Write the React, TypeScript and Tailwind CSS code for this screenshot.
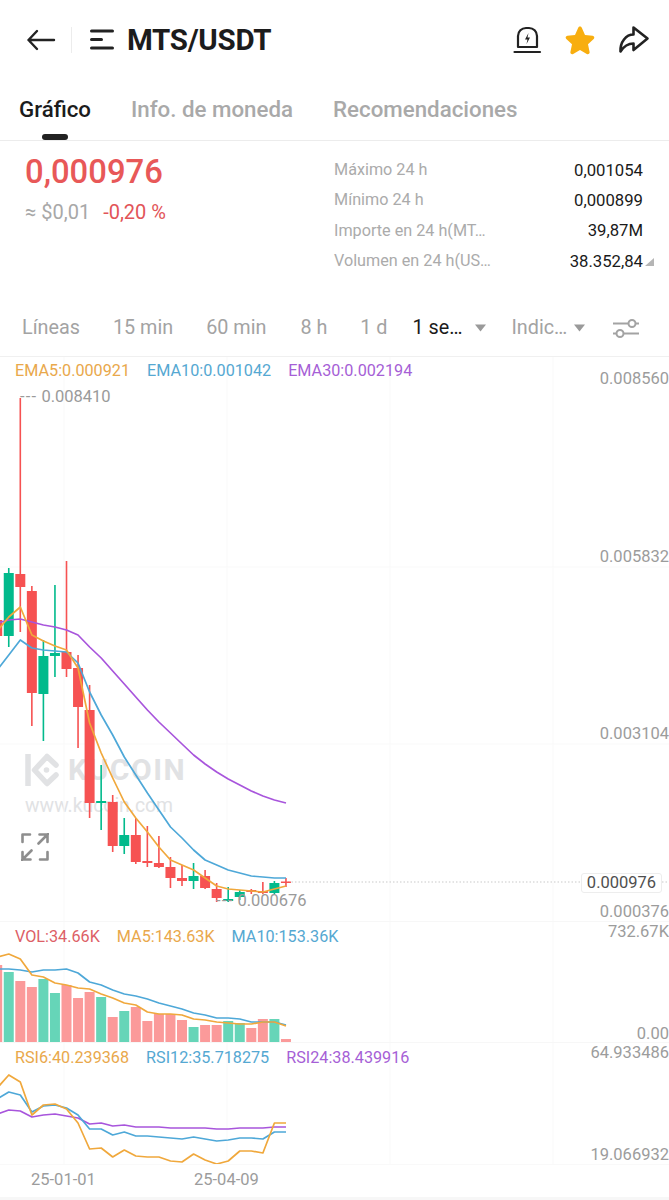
import { ReactNode } from 'react';

const RED = '#f65252';
const GREEN = '#02ba8c';
const ORANGE = '#f0a83c';
const BLUE = '#4ea8d8';
const PURPLE = '#a855dc';

const xAt = (i: number) => 20.3 + (i - 2) * 11.55;

// index 0 is the clipped candle on the left edge: [isGreen, high, open, close, low]
const candles: [boolean, number, number, number, number][] = [
  [false, 612, 620, 636, 640],
  [true, 568, 573, 636, 647],
  [false, 398, 574, 587, 632],
  [false, 586, 591, 693, 726],
  [true, 640, 656, 694, 741],
  [true, 585, 653, 656, 677],
  [false, 561, 652, 669, 677],
  [false, 655, 668, 707, 748],
  [false, 685, 710, 803, 818],
  [true, 765, 801, 803, 830],
  [false, 795, 802, 846, 852],
  [true, 818, 835, 846, 854],
  [false, 818, 835, 862, 864],
  [false, 826, 861, 863, 867],
  [false, 836, 863, 867, 868],
  [false, 857, 867, 878, 888],
  [false, 865, 878, 881, 886],
  [true, 863, 876, 881, 889],
  [false, 870, 876, 888, 889],
  [false, 883, 889, 898, 902],
  [true, 887, 899, 901, 902],
  [true, 890, 892, 897, 900],
  [false, 889, 890, 892, 894],
  [false, 882, 891, 893, 894],
  [true, 881, 883, 893, 894],
  [false, 878, 881.5, 883, 887],
];

const ema5 = [631, 617, 607, 635, 641, 646, 650, 668, 723, 753, 778, 802, 818, 832, 847, 860, 865, 870, 878, 886, 889, 890, 891, 892, 889, 886];
const ema10 = [670, 655, 640, 648, 650, 651, 652, 663, 692, 715, 735, 757, 775, 793, 810, 827, 838, 850, 860, 865, 870, 873, 876, 877, 878, 878];
const ema30 = [623, 620, 619, 622, 625, 627, 630, 635, 647, 658, 671, 684, 697, 710, 722, 733, 744, 755, 764, 772, 779, 785, 791, 796, 800, 803];

const volumes: [boolean, number][] = [
  [false, 965], [true, 972], [false, 981], [false, 987], [true, 979], [true, 993], [false, 985], [false, 998], [false, 992], [true, 997],
  [false, 1017], [true, 1011], [false, 1007], [false, 1021], [false, 1014], [false, 1014], [false, 1020], [true, 1027], [false, 1025], [false, 1025],
  [true, 1021], [true, 1023], [false, 1028], [false, 1019], [true, 1019], [false, 1039],
];
const volMa5 = [957, 954, 959, 975, 977, 983, 985, 988, 989, 994, 998, 1003, 1005, 1012, 1014, 1014, 1015, 1019, 1020, 1022, 1023, 1024, 1024, 1022, 1022, 1026];
const volMa10 = [969, 969, 970, 972, 970, 970, 969, 973, 982, 985, 990, 994, 996, 999, 1003, 1006, 1009, 1013, 1015, 1018, 1018, 1019, 1022, 1022, 1022, 1025];

const rsi6 = [1088, 1075, 1082, 1115, 1105, 1104, 1109, 1123, 1149, 1148, 1157, 1150, 1156, 1157, 1157, 1161, 1162, 1154, 1160, 1164, 1161, 1151, 1151, 1153, 1123, 1123];
const rsi12 = [1099, 1092, 1095, 1112, 1106, 1105, 1108, 1115, 1129, 1129, 1135, 1132, 1136, 1136, 1137, 1138, 1139, 1137, 1139, 1141, 1140, 1138, 1138, 1139, 1132, 1132];
const rsi24 = [1114, 1110, 1111, 1117, 1115, 1114, 1116, 1118, 1124, 1123, 1126, 1125, 1127, 1127, 1127, 1128, 1128, 1128, 1128, 1129, 1129, 1128, 1128, 1128, 1127, 1127];

function Line({ data, color, width = 1.7 }: { data: number[]; color: string; width?: number }) {
  const points = data.map((y, i) => `${xAt(i).toFixed(1)},${y}`).join(' ');
  return <polyline points={points} fill="none" stroke={color} strokeWidth={width} strokeLinejoin="round" />;
}

function GridV({ top, bottom }: { top: number; bottom: number }) {
  return (
    <>
      {[64, 227, 390, 553].map((x) => (
        <line key={x} x1={x} x2={x} y1={top} y2={bottom} stroke="#f9f9f9" />
      ))}
    </>
  );
}

function Legend({ items, low }: { items: [string, string][]; low?: boolean }) {
  return (
    <div className={`relative flex gap-[17px] pl-[15px] text-[16.2px] leading-[28px] ${low ? 'pt-px' : ''}`}>
      {items.map(([label, color]) => (
        <span key={label} style={{ color }}>
          {label}
        </span>
      ))}
    </div>
  );
}

function Axis({ top, children }: { top: number; children: ReactNode }) {
  return (
    <span className="absolute right-0 text-[16.5px] leading-5 text-[#9c9c9c]" style={{ top }}>
      {children}
    </span>
  );
}

function HeaderIcons() {
  return (
    <div className="flex items-center gap-[21px] pr-[18px]">
      <svg className="mr-px" width="30" height="30" viewBox="0 0 30 30" fill="none" stroke="#222" strokeWidth="2.2" strokeLinecap="round" strokeLinejoin="round">
        <path d="M6 22V11a8 8 0 0 1 8-8h3a8 8 0 0 1 8 8v11z" />
        <path d="M16.500 8L13 14.500h2.500L14.500 19l3.500-6.500h-2.500z" fill="#222" stroke="none" />
        <path d="M2.500 27h25.500" />
      </svg>
      <svg width="32" height="32" viewBox="0 0 32 32">
        <path
          d="M16 2.5c.8 0 1.4.5 1.8 1.3l3.2 7.1 7.6.9c1.7.2 2.3 2 1.1 3.2l-5.7 5.3 1.6 7.7c.3 1.6-1.3 2.8-2.8 2l-6.8-3.9-6.8 3.9c-1.5.8-3.1-.4-2.8-2l1.6-7.7-5.7-5.3c-1.2-1.2-.6-3 1.100-3.2l7.6-.9 3.200-7.100c.4-.8 1-1.300 1.800-1.300z"
          fill="#f8ae0f"
        />
      </svg>
      <svg width="34" height="34" viewBox="0 0 34 34" fill="none" stroke="#222" strokeWidth="2.600" strokeLinejoin="round" strokeLinecap="round">
        <path d="M16.500 4.500L30.500 15.500L16.500 27V20.500C11 20.500 7 23 3.500 28.500C3 19 9 11.500 16.500 11.500z" />
      </svg>
    </div>
  );
}

function Toolbar() {
  const caret = (
    <svg width="11" height="8" viewBox="0 0 11 8" fill="#9a9a9a">
      <path d="M0 0.500h11L5.500 7.500z" />
    </svg>
  );
  return (
    <div className="flex h-[60px] shrink-0 items-center border-b border-[#f0f0f0] pl-[22px] pt-[2px] text-[19.800px] text-[#a3a3a3]">
      <span>Líneas</span>
      <span className="ml-[33px]">15 min</span>
      <span className="ml-[33px]">60 min</span>
      <span className="ml-[34px]">8 h</span>
      <span className="ml-[33px]">1 d</span>
      <span className="ml-[25px] text-[#1b1b1b]">1 se…</span>
      <span className="ml-[13px]">{caret}</span>
      <span className="ml-[25px]">Indic…</span>
      <span className="ml-[7px]">{caret}</span>
      <svg className="ml-[27px]" width="28" height="24" viewBox="0 0 28 24" fill="none" stroke="#a3a3a3" strokeWidth="2">
        <path d="M1 7.500h15M24 7.500h3M1 17.500h3M12 17.500h15" />
        <circle cx="20" cy="7.500" r="3.500" />
        <circle cx="8" cy="17.500" r="3.500" />
      </svg>
    </div>
  );
}

function StatRow({ label, value, mark }: { label: string; value: string; mark?: boolean }) {
  return (
    <div className="relative flex h-[30.3px] items-center justify-between">
      <span className="text-[16.2px] text-[#ababab]">{label}</span>
      <span className="text-[16.7px] text-[#1a1a1a]">{value}</span>
      {mark && (
        <svg className="absolute left-[311px] top-[12px]" width="9" height="8" viewBox="0 0 9 8" fill="#b5b5b5">
          <path d="M9 0v8H0z" />
        </svg>
      )}
    </div>
  );
}

function Extreme({ className, value }: { className: string; value: string }) {
  return (
    <span className={`absolute text-[16.5px] leading-5 text-[#9a9a9a] ${className}`}>
      <span className="tracking-[1.2px]">---</span> {value}
    </span>
  );
}

function MainPane() {
  return (
    <div className="relative h-[565px] shrink-0 overflow-hidden border-b border-[#f7f7f7]">
      {/* watermark sits under the candles */}
      <div className="absolute left-[25px] top-[390px] text-[#e1e2e4]">
        <div className="flex items-center gap-[9px]">
          <svg width="34" height="38" viewBox="0 0 34 38" fill="none" stroke="#e1e2e4" strokeWidth="5.500">
            <path d="M3 3v32" />
            <path d="M31 14L22 5.500 9.500 19 22 32.500l9-8.500" strokeLinecap="round" strokeLinejoin="round" />
            <circle cx="21.500" cy="19" r="2.800" fill="#e1e2e4" stroke="none" />
          </svg>
          <span className="text-[30px] font-bold tracking-[1.500px]">KUCOIN</span>
        </div>
        <div className="mt-[2px] text-[19.400px] leading-6">www.kucoin.com</div>
      </div>

      <svg className="absolute inset-0" width="669" height="565" viewBox="0 357 669 565">
        <GridV top={357} bottom={922} />
        {[567, 744].map((y) => (
          <line key={y} x1="0" x2="669" y1={y} y2={y} stroke="#f9f9f9" />
        ))}
        <line x1="288" x2="581" y1="882" y2="882" stroke="#c9c9c9" strokeDasharray="1.500 2" />
        <line x1="662" x2="669" y1="882" y2="882" stroke="#c9c9c9" strokeDasharray="1.500 2" />
        {candles.map(([up, high, open, close, low], i) => {
          const x = xAt(i);
          const color = up ? GREEN : RED;
          return (
            <g key={i} fill={color}>
              <rect x={x - 0.8} y={high} width="1.600" height={low - high} />
              <rect x={x - 5} y={open} width="10" height={Math.max(close - open, 1.500)} />
            </g>
          );
        })}
        <Line data={ema30} color={PURPLE} />
        <Line data={ema10} color={BLUE} />
        <Line data={ema5} color={ORANGE} />
      </svg>

      <Legend
        items={[
          ['EMA5:0.000921', '#e9a84b'],
          ['EMA10:0.001042', '#55a8d2'],
          ['EMA30:0.002194', '#a65fd6'],
        ]}
      />
      <Extreme className="left-[20px] top-[30px]" value="0.008410" />
      <Extreme className="left-[216px] top-[534px]" value="0.000676" />

      <svg className="absolute left-[21px] top-[476px]" width="28" height="28" viewBox="0 0 28 28" fill="none" stroke="#8e8e8e" strokeWidth="2.600" strokeLinecap="round" strokeLinejoin="round">
        <path d="M9 1.500H1.500V9M19 26.500h7.500V19M27 1L17.500 10.500M18.500 1.500h8V9M1 27l9.500-9.500M1.500 19v7.500h8" />
      </svg>

      <Axis top={12}>0.008560</Axis>
      <Axis top={190}>0.005832</Axis>
      <Axis top={367}>0.003104</Axis>
      <Axis top={545}>0.000376</Axis>
      <span className="absolute left-[581px] top-[516px] flex h-[20px] w-[81px] items-center justify-center rounded-[3px] border border-[#ededed] bg-white text-[16.500px] text-[#4f4f4f]">
        0.000976
      </span>
    </div>
  );
}

function VolumePane() {
  return (
    <div className="relative h-[121px] shrink-0 overflow-hidden border-b border-[#f7f7f7]">
      <svg className="absolute inset-0" width="669" height="121" viewBox="0 922 669 121">
        <GridV top={922} bottom={1043} />
        {volumes.map(([up, top], i) => (
          <rect key={i} x={xAt(i) - 5} y={top} width="10" height={1043 - top} fill={up ? '#66d5b8' : '#fb9a9a'} />
        ))}
        <Line data={volMa10} color={BLUE} />
        <Line data={volMa5} color={ORANGE} />
      </svg>
      <Legend
        low
        items={[
          ['VOL:34.66K', '#dd5f67'],
          ['MA5:143.63K', '#e9a84b'],
          ['MA10:153.36K', '#55a8d2'],
        ]}
      />
      <Axis top={0}>732.67K</Axis>
      <Axis top={102}>0.00</Axis>
    </div>
  );
}

function RsiPane() {
  return (
    <div className="relative h-[122px] shrink-0 overflow-hidden border-b border-[#f9f9f9]">
      <svg className="absolute inset-0" width="669" height="122" viewBox="0 1043 669 122">
        <GridV top={1043} bottom={1165} />
        <Line data={rsi24} color={PURPLE} />
        <Line data={rsi12} color={BLUE} />
        <Line data={rsi6} color={ORANGE} />
      </svg>
      <Legend
        low
        items={[
          ['RSI6:40.239368', '#e9a84b'],
          ['RSI12:35.718275', '#55a8d2'],
          ['RSI24:38.439916', '#a65fd6'],
        ]}
      />
      <Axis top={0}>64.933486</Axis>
      <Axis top={102}>19.066932</Axis>
    </div>
  );
}

export default function App() {
  return (
    <div className="flex h-[1200px] w-[669px] flex-col overflow-hidden bg-white font-['Roboto',sans-serif]">
      {/* Header */}
      <div className="flex h-[80px] shrink-0 items-center justify-between">
        <div className="flex items-center">
          <svg className="ml-[26px]" width="30" height="24" viewBox="0 0 30 24" fill="none" stroke="#222" strokeWidth="2.400" strokeLinecap="round" strokeLinejoin="round">
            <path d="M11 3L2.500 12l8.500 9M2.500 12h25.500" />
          </svg>
          <div className="ml-[15px] h-[26px] w-px bg-[#ececec]" />
          <svg className="ml-[17px]" width="26" height="22" viewBox="0 0 26 22" fill="#222">
            <rect x="1" y="0.500" width="24" height="3" rx="1.500" />
            <rect x="1" y="9" width="13" height="3" rx="1.500" />
            <rect x="1" y="17.500" width="24" height="3" rx="1.500" />
          </svg>
          <span className="ml-[12px] text-[29.500px] font-bold tracking-[-0.300px] text-[#1c1c1c]">MTS/USDT</span>
        </div>
        <HeaderIcons />
      </div>

      {/* Tabs */}
      <div className="relative flex h-[61px] shrink-0 gap-[40px] border-b border-[#ececec] pl-[19px] pt-[13px] text-[22.300px] leading-[32px] text-[#a9a9a9]">
        <span className="font-medium text-[#1c1c1c]">Gráfico</span>
        <span className="font-medium">Info. de moneda</span>
        <span className="font-medium">Recomendaciones</span>
        <div className="absolute bottom-0 left-[42px] h-[6px] w-[26px] rounded-full bg-[#222]" />
      </div>

      {/* Price and stats */}
      <div className="flex h-[156px] shrink-0 justify-between pl-[25px] pr-[26px]">
        <div>
          <div className="pt-[10px] text-[32.800px] font-medium leading-[42px] text-[#e85858]">0,000976</div>
          <div className="mt-[7px] flex gap-[13px] text-[20px] leading-6">
            <span className="text-[#a8a8a8]">≈ $0,01</span>
            <span className="text-[#e25458]">-0,20 %</span>
          </div>
        </div>
        <div className="w-[309px] pt-[14px]">
          <StatRow label="Máximo 24 h" value="0,001054" />
          <StatRow label="Mínimo 24 h" value="0,000899" />
          <StatRow label="Importe en 24 h(MT…" value="39,87M" />
          <StatRow label="Volumen en 24 h(US…" value="38.352,84" mark />
        </div>
      </div>

      <Toolbar />
      <MainPane />
      <VolumePane />
      <RsiPane />

      {/* Date axis */}
      <div className="relative h-[35px] shrink-0 border-b-[3px] border-[#f7f7f7] text-[16.500px] leading-[30px] text-[#9c9c9c]">
        <span className="absolute left-[31px]">25-01-01</span>
        <span className="absolute left-[194px]">25-04-09</span>
      </div>
    </div>
  );
}
